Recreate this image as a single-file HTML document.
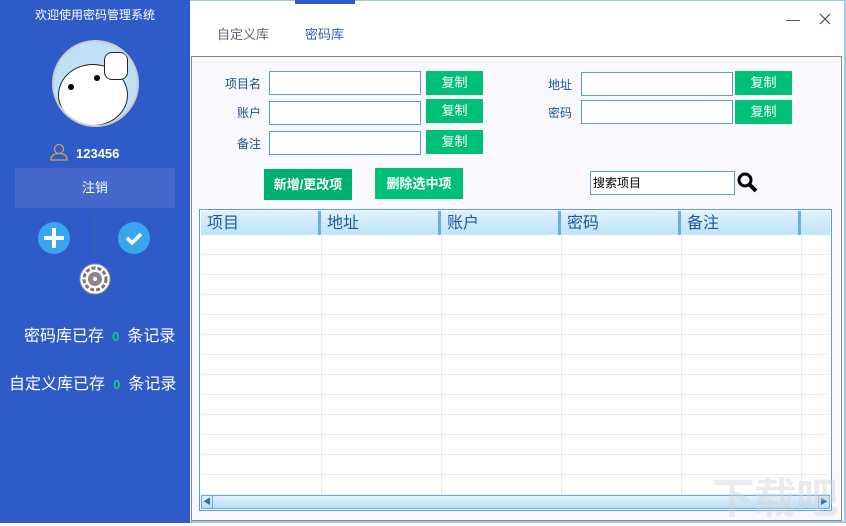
<!DOCTYPE html>
<html><head><meta charset="utf-8"><style>
*{margin:0;padding:0;box-sizing:border-box}
body{width:846px;height:523px;position:relative;overflow:hidden;background:#fff;font-family:"Liberation Sans","Noto Sans CJK SC",sans-serif}
.a{position:absolute}
.side{left:0;top:0;width:190px;height:523px;background:#2f5bc9;color:#fff}
.lbl{font-size:12px;color:#1f4f8a}
.inp{background:#fff;border:1px solid #5a9ae0;height:24px}
.btn{background:#00c078;color:#fff;font-size:13px;text-align:center;line-height:24px;height:24px;width:57px}
.big{background:#00b070;color:#fff;font-size:13px;font-weight:bold;text-align:center}
.hd{top:211px;height:24px;background:linear-gradient(#dff1fd,#bfe3f8);border-right:3px solid #6aaee0;font-size:16px;color:#1c5a96;padding-left:6px;line-height:26px}
.vl{width:1px;background:#ececec;top:235px;height:260px}
.hl{left:201px;width:628px;height:1px;background:#ececec}
.z{color:#10d080;font-size:13px;font-weight:bold}
</style></head><body>
<div class="a side">
<div class="a" style="left:0;width:190px;top:6px;text-align:center;font-size:12px">欢迎使用密码管理系统</div>
<div class="a" style="left:52px;top:40px;width:87px;height:87px;border-radius:50%;background:#bfe0f5;border:2px solid #ccc;overflow:hidden">
<div class="a" style="left:4px;top:22px;width:70px;height:62px;border-radius:50%;background:#fff;border:1px solid #222"></div>
<div class="a" style="left:14px;top:42px;width:6px;height:6px;border-radius:50%;background:#000"></div>
<div class="a" style="left:40px;top:33px;width:6px;height:6px;border-radius:50%;background:#000"></div>
<div class="a" style="left:50px;top:10px;width:24px;height:28px;border-radius:8px;background:#fff;border:1px solid #222"></div>
</div>
<svg class="a" style="left:50px;top:143px" width="18" height="18" viewBox="0 0 18 18" fill="none" stroke="#d0a050" stroke-width="1.3"><circle cx="9" cy="6" r="4.5"/><path d="M1 17c0-5 3.5-6.5 8-6.5s8 1.5 8 6.5z"/></svg>
<div class="a" style="left:76px;top:146px;font-size:13px;font-weight:bold">123456</div>
<div class="a" style="left:15px;top:168px;width:160px;height:40px;background:#4468cc;text-align:center;line-height:40px;font-size:13px">注销</div>
<div class="a" style="left:94px;top:215px;width:1px;height:40px;background:#3a6aa0"></div>
<div class="a" style="left:38px;top:222px;width:32px;height:32px;border-radius:50%;background:#3aa6ee"></div>
<div class="a" style="left:44px;top:236px;width:20px;height:4px;background:#fff"></div>
<div class="a" style="left:52px;top:228px;width:4px;height:20px;background:#fff"></div>
<div class="a" style="left:118px;top:222px;width:32px;height:32px;border-radius:50%;background:#3aa6ee"></div>
<svg class="a" style="left:118px;top:222px" width="32" height="32"><path d="M9 16l5 5 9-9" stroke="#fff" stroke-width="3.5" fill="none"/></svg>
<svg class="a" style="left:79px;top:263px" width="32" height="32"><circle cx="16" cy="16" r="15" fill="#fff" stroke="#999"/><circle cx="16" cy="16" r="11" fill="none" stroke="#777" stroke-width="3" stroke-dasharray="4 2"/><circle cx="16" cy="16" r="7" fill="#888"/><circle cx="16" cy="16" r="2" fill="#fff"/></svg>
<div class="a" style="left:24px;top:322px;font-size:16px">密码库已存 <span class="z">&nbsp;0&nbsp;</span> 条记录</div>
<div class="a" style="left:9px;top:370px;font-size:16px">自定义库已存 <span class="z">&nbsp;0&nbsp;</span> 条记录</div>
</div>
<div class="a" style="left:190px;top:0;width:656px;height:523px;border-right:2px solid #9cc8ec;border-bottom:2px solid #9cc8ec;border-top:1px solid #9cc8ec"></div>
<div class="a" style="left:295px;top:0;width:60px;height:4px;background:#2f5bc9"></div>
<div class="a" style="left:217px;top:24px;font-size:13px;color:#667">自定义库</div>
<div class="a" style="left:305px;top:24px;font-size:13px;color:#2f5bc9">密码库</div>
<div class="a" style="left:786px;top:20px;width:14px;height:1px;background:#555"></div>
<svg class="a" style="left:819px;top:13px" width="12" height="12"><path d="M1 1l10 10M11 1L1 11" stroke="#444" stroke-width="1.1"/></svg>
<div class="a" style="left:191px;top:56px;width:651px;height:465px;background:#f9f9fd;border:1px solid #888"></div>
<div class="a lbl" style="left:225px;top:75px">项目名</div>
<div class="a lbl" style="left:237px;top:104px">账户</div>
<div class="a lbl" style="left:237px;top:135px">备注</div>
<div class="a inp" style="left:269px;top:71px;width:152px"></div>
<div class="a inp" style="left:269px;top:101px;width:152px"></div>
<div class="a inp" style="left:269px;top:131px;width:152px"></div>
<div class="a btn" style="left:426px;top:71px">复制</div>
<div class="a btn" style="left:426px;top:99px">复制</div>
<div class="a btn" style="left:426px;top:130px">复制</div>
<div class="a lbl" style="left:548px;top:76px">地址</div>
<div class="a lbl" style="left:548px;top:104px">密码</div>
<div class="a inp" style="left:581px;top:72px;width:152px"></div>
<div class="a inp" style="left:581px;top:100px;width:152px"></div>
<div class="a btn" style="left:735px;top:71px">复制</div>
<div class="a btn" style="left:735px;top:100px">复制</div>
<div class="a big" style="left:264px;top:169px;width:88px;height:31px;line-height:31px">新增/更改项</div>
<div class="a big" style="left:375px;top:168px;width:88px;height:31px;line-height:31px;background:#00c078">删除选中项</div>
<div class="a inp" style="left:590px;top:171px;width:145px;font-size:12px;line-height:22px;padding-left:2px;color:#000">搜索项目</div>
<svg class="a" style="left:737px;top:172px" width="22" height="22"><circle cx="8" cy="8" r="6" stroke="#000" stroke-width="3" fill="none"/><path d="M12 12l7 7" stroke="#000" stroke-width="4"/></svg>
<div class="a" style="left:199px;top:209px;width:633px;height:302px;border:1px solid #5a9ae0;background:#fff"></div>
<div class="a hd" style="left:201px;width:120px">项目</div>
<div class="a hd" style="left:321px;width:120px">地址</div>
<div class="a hd" style="left:441px;width:120px">账户</div>
<div class="a hd" style="left:561px;width:120px">密码</div>
<div class="a hd" style="left:681px;width:120px">备注</div>
<div class="a hd" style="left:801px;width:29px;border-right:0"></div>
<div class="a vl" style="left:321px"></div><div class="a vl" style="left:441px"></div><div class="a vl" style="left:561px"></div><div class="a vl" style="left:681px"></div><div class="a vl" style="left:801px"></div>
<div class="a hl" style="top:254px"></div><div class="a hl" style="top:274px"></div><div class="a hl" style="top:294px"></div><div class="a hl" style="top:314px"></div><div class="a hl" style="top:334px"></div><div class="a hl" style="top:354px"></div><div class="a hl" style="top:374px"></div><div class="a hl" style="top:394px"></div><div class="a hl" style="top:414px"></div><div class="a hl" style="top:434px"></div><div class="a hl" style="top:454px"></div><div class="a hl" style="top:474px"></div><div class="a hl" style="top:494px"></div>
<div class="a" style="left:201px;top:495px;width:629px;height:14px;background:linear-gradient(#e0f2fd,#b8def6);border:1px solid #6aaee0"></div>
<div class="a" style="left:201px;top:495px;width:12px;height:14px;border:1px solid #6aaee0;font-size:8px;color:#2a70b0;text-align:center;line-height:12px">◀</div>
<div class="a" style="left:818px;top:495px;width:12px;height:14px;border:1px solid #6aaee0;font-size:8px;color:#2a70b0;text-align:center;line-height:12px">▶</div>
<div class="a" style="left:712px;top:465px;font-size:42px;color:rgba(210,210,210,0.45);font-weight:bold">下载吧</div>
</body></html>
